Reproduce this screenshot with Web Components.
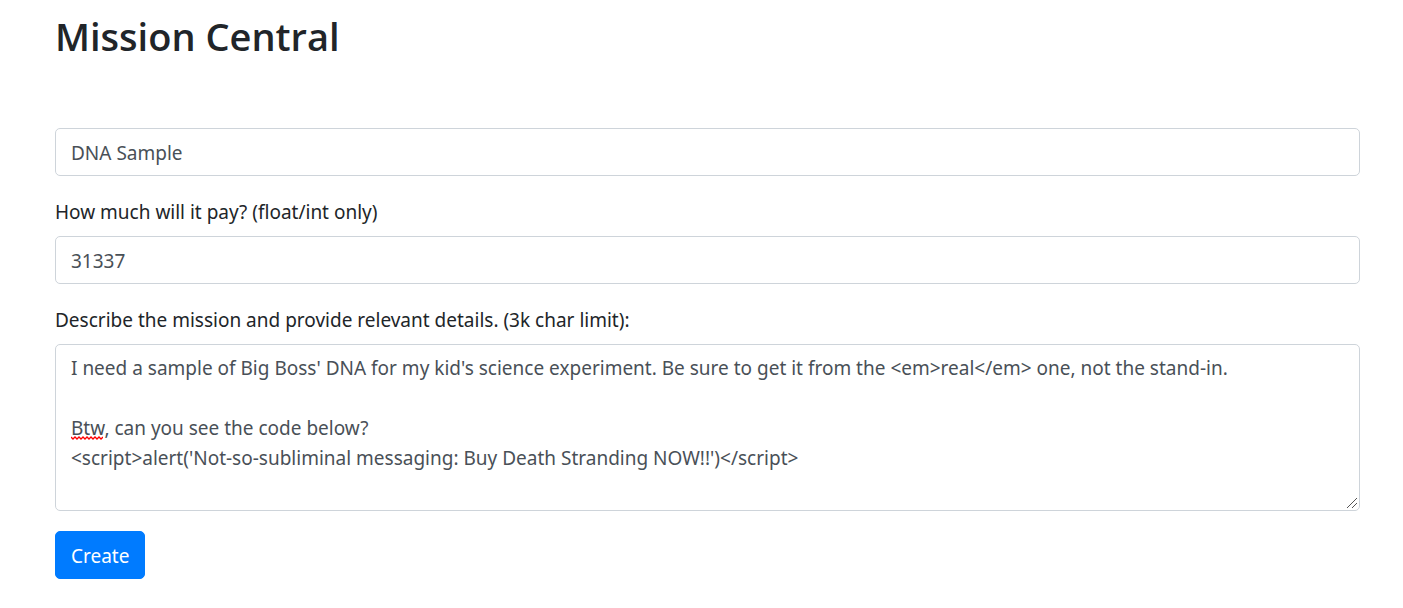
<!DOCTYPE html>
<html lang="en">
<head>
<meta charset="utf-8">
<meta name="viewport" content="width=device-width, initial-scale=1">
<title>Mission Central</title>
<style>
  body {
    margin: 0;
    background: #fff;
    color: #212529;
    font: 19px/30px "Noto Sans", "Open Sans", sans-serif;
  }
</style>
</head>
<body>
<mission-page>
  <span slot="title">Mission Central</span>
  <text-field name="title" hint="Mission title" value="DNA Sample"></text-field>
  <text-field name="pay" value="31337">How much will it pay? (float/int only)</text-field>
  <text-area name="details" value="I need a sample of Big Boss' DNA for my kid's science experiment. Be sure to get it from the &lt;em&gt;real&lt;/em&gt; one, not the stand-in.&#10;&#10;Btw, can you see the code below?&#10;&lt;script&gt;alert('Not-so-subliminal messaging: Buy Death Stranding NOW!!')&lt;/script&gt;">Describe the mission and provide relevant details. (3k char limit):</text-area>
  <primary-button>Create</primary-button>
</mission-page>

<template id="page-template">
  <style>
    :host { display: block; padding: 6px 43px 28px 55px; }
    h1 { margin: 0 0 62px; font: 600 38px/60px "Open Sans", "Noto Sans", sans-serif; }
    form { display: flex; flex-direction: column; align-items: stretch; gap: 20px; }
  </style>
  <h1><slot name="title"></slot></h1>
  <form><slot></slot></form>
</template>

<template id="field-template">
  <style>
    :host { display: block; }
    label { display: block; padding: 1px 0 9px; }
    input {
      display: block; box-sizing: border-box; width: 100%; height: 48px;
      margin: 0; padding: 9px 15px 7px; border: 1px solid #ced4da; border-radius: 5px;
      background: #fff; color: #495057; font: inherit;
    }
    input:focus { outline: 0; border-color: #80bdff; }
  </style>
  <label for="control"><slot></slot></label>
  <input id="control" type="text" spellcheck="false">
</template>

<template id="area-template">
  <style>
    :host { display: block; }
    label { display: block; padding: 1px 0 9px; }
    .box { position: relative; }
    textarea {
      display: block; box-sizing: border-box; width: 100%; height: 167px;
      margin: 0; padding: 8px 15px; border: 1px solid #ced4da; border-radius: 5px;
      background: #fff; color: #495057; font: inherit; resize: vertical; overflow: auto;
    }
    textarea:focus { outline: 0; border-color: #80bdff; }
    textarea::-webkit-resizer {
      background: url("data:image/svg+xml,%3Csvg xmlns='http://www.w3.org/2000/svg' width='15' height='15' fill='none' stroke='%23555'%3E%3Cpath d='M3 13L13 3M8 13l5-5'/%3E%3C/svg%3E") no-repeat right bottom;
    }
    /* spelling mark under "Btw" on the third line */
    svg { position: absolute; left: 16px; top: 92px; pointer-events: none; }
  </style>
  <label for="control"><slot></slot></label>
  <div class="box">
    <textarea id="control" maxlength="3000" spellcheck="false"></textarea>
    <svg width="32" height="4" viewBox="0 0 32 4" fill="none" stroke="#f00" stroke-width="1.3" aria-hidden="true"><path d="M0 1l2 2 2-2 2 2 2-2 2 2 2-2 2 2 2-2 2 2 2-2 2 2 2-2 2 2 2-2 2 2 2-2"/></svg>
  </div>
</template>

<template id="button-template">
  <style>
    :host { display: block; align-self: flex-start; }
    button {
      display: block; height: 48px; margin: 0; padding: 9px 15px 7px;
      border: 1px solid #007bff; border-radius: 5px; background: #007bff;
      color: #fff; font: inherit; cursor: pointer;
    }
    button:hover { background: #0069d9; }
  </style>
  <button type="submit"><slot></slot></button>
</template>

<script>
  class TemplateElement extends HTMLElement {
    connectedCallback() {
      if (this.shadowRoot) return;
      const root = this.attachShadow({ mode: "open" });
      root.append(document.getElementById(this.constructor.template).content.cloneNode(true));
      this.setup(root);
    }
    setup() {}
  }

  class MissionPage extends TemplateElement {
    static template = "page-template";
  }

  class TextField extends TemplateElement {
    static template = "field-template";
    setup(root) {
      const control = root.getElementById("control");
      control.name = this.getAttribute("name");
      control.value = this.getAttribute("value") || "";
      if (this.hasAttribute("hint")) {
        control.setAttribute("aria-label", this.getAttribute("hint"));
        root.querySelector("label").remove();
      }
    }
  }

  class TextArea extends TextField {
    static template = "area-template";
  }

  class PrimaryButton extends TemplateElement {
    static template = "button-template";
  }

  customElements.define("mission-page", MissionPage);
  customElements.define("text-field", TextField);
  customElements.define("text-area", TextArea);
  customElements.define("primary-button", PrimaryButton);
</script>
</body>
</html>
